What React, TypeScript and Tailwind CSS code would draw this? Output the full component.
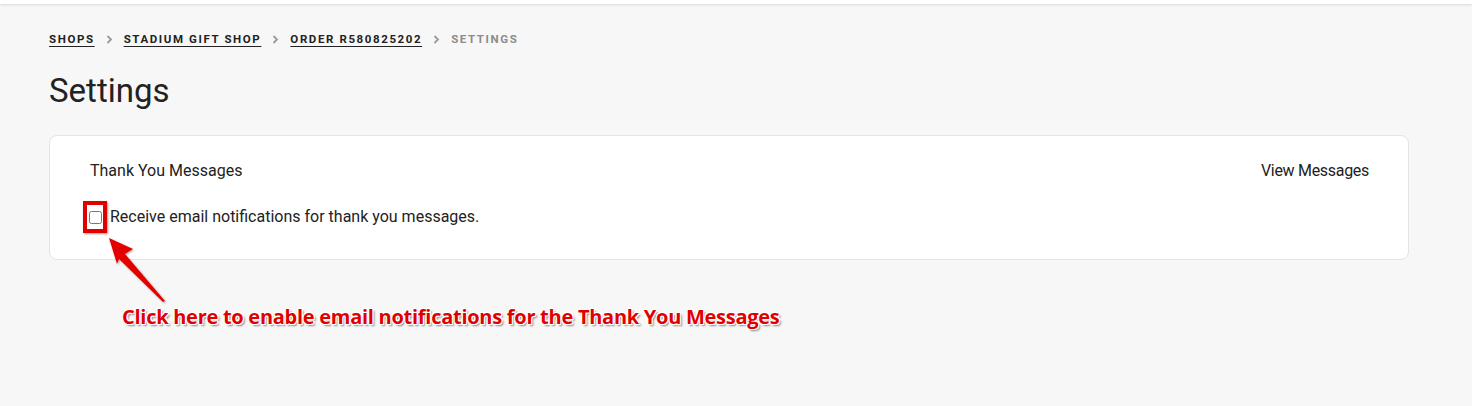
import React from "react";

function Chevron() {
  return (
    <svg width="7" height="9" viewBox="0 0 7 9" className="mx-[1px]">
      <path d="M1.5 1 L5 4.5 L1.5 8" fill="none" stroke="#9a9a9a" strokeWidth="1.8" />
    </svg>
  );
}

export default function App() {
  return (
    <div className="relative w-[1472px] h-[406px] overflow-hidden bg-[#f7f7f7]" style={{ fontFamily: "Roboto, 'Noto Sans', sans-serif" }}>
      <div className="h-[4px] bg-white shadow-[0_1px_3px_rgba(0,0,0,0.12)]" />
      <div className="pl-[49px] pr-[63px]">
        <nav className="mt-[27px] flex items-center gap-[10px] text-[11.5px] font-bold tracking-[1.6px] uppercase text-[#222]">
          <span className="underline underline-offset-[3px]">Shops</span>
          <Chevron />
          <span className="underline underline-offset-[3px]">Stadium Gift Shop</span>
          <Chevron />
          <span className="underline underline-offset-[3px]">Order R580825202</span>
          <Chevron />
          <span className="text-[#8c8c8c]">Settings</span>
        </nav>
        <h1 className="mt-[23px] text-[33px] leading-[40px] text-[#222]">Settings</h1>
        <div className="mt-[24px] h-[125px] rounded-[8px] border border-[#e3e3e8] bg-white pl-[40px] pr-[39px] pt-[24px]">
          <div className="flex items-center justify-between text-[16px] leading-[22px] text-[#222]">
            <span>Thank You Messages</span>
            <span className="tracking-[-0.3px]">View Messages</span>
          </div>
          <div className="mt-[24px] flex items-center text-[16px] leading-[22px] text-[#222]">
            <input type="checkbox" className="ml-[-1px] h-[13px] w-[13px] mr-[8px]" />
            <span>Receive email notifications for thank you messages.</span>
          </div>
        </div>
      </div>

      <div className="absolute left-[83px] top-[201px] w-[24px] h-[32px] border-[4px] border-[#e00000] shadow-[1px_1px_2px_rgba(0,0,0,0.4)]" />

      <svg className="absolute left-0 top-0" width="300" height="320" viewBox="0 0 300 320">
        <defs>
          <filter id="sh" x="-20%" y="-20%" width="140%" height="140%">
            <feDropShadow dx="1" dy="1" stdDeviation="1" floodColor="#000" floodOpacity="0.35" />
          </filter>
        </defs>
        <polygon
          points="109,238 133,249 125,254 165,301 163,302 119,259 117,264"
          fill="#e50000"
          filter="url(#sh)"
        />
      </svg>

      <div
        className="absolute left-[122px] top-[303px] text-[20px] font-bold leading-[28px] text-[#e00000] tracking-[-0.27px]"
        style={{
          fontFamily: "'Open Sans', sans-serif",
          textShadow:
            "-1px -1px 0 #fff, 1px -1px 0 #fff, -1px 1px 0 #fff, 1px 1px 0 #fff, 2px 2px 2px rgba(0,0,0,0.45)",
        }}
      >
        Click here to enable email notifications for the Thank You Messages
      </div>
    </div>
  );
}
